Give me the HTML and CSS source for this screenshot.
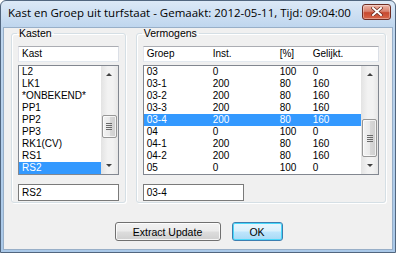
FILE: index.html
```html
<!DOCTYPE html>
<html lang="nl">
<head>
    <meta charset="UTF-8">
    <title>Kast en Groep uit turfstaat</title>
    <link rel="stylesheet" href="styles.css">
</head>
<body>
    <div class="window">
        <div class="titlebar">
            <span class="title">Kast en Groep uit turfstaat - Gemaakt: 2012-05-11, Tijd: 09:04:00</span>
            <button class="close">
                <svg width="12" height="9" viewBox="0 0 12 9">
                    <path d="M2 1 L10 8 M10 1 L2 8" stroke="#6b2a20" stroke-width="3.4" stroke-linecap="square"/>
                    <path d="M2 1 L10 8 M10 1 L2 8" stroke="#fff" stroke-width="2" stroke-linecap="square"/>
                </svg>
            </button>
        </div>

        <div class="client">
            <div class="groups">
                <fieldset class="group kasten">
                    <legend>Kasten</legend>
                    <div class="header">Kast</div>
                    <div class="listbox">
                        <div class="rows">
                            <div class="row">L2</div>
                            <div class="row">LK1</div>
                            <div class="row">*ONBEKEND*</div>
                            <div class="row">PP1</div>
                            <div class="row">PP2</div>
                            <div class="row">PP3</div>
                            <div class="row">RK1(CV)</div>
                            <div class="row">RS1</div>
                            <div class="row selected">RS2</div>
                        </div>
                        <div class="scrollbar">
                            <div class="arrow up"></div>
                            <div class="track"><div class="thumb thumb-kasten"><i></i><i></i><i></i><i></i></div></div>
                            <div class="arrow down"></div>
                        </div>
                    </div>
                    <div class="field">RS2</div>
                </fieldset>

                <fieldset class="group vermogens">
                    <legend>Vermogens</legend>
                    <div class="header cols">
                        <span>Groep</span><span>Inst.</span><span>[%]</span><span>Gelijkt.</span>
                    </div>
                    <div class="listbox">
                        <div class="rows">
                            <div class="row cols"><span>03</span><span>0</span><span>100</span><span>0</span></div>
                            <div class="row cols"><span>03-1</span><span>200</span><span>80</span><span>160</span></div>
                            <div class="row cols"><span>03-2</span><span>200</span><span>80</span><span>160</span></div>
                            <div class="row cols"><span>03-3</span><span>200</span><span>80</span><span>160</span></div>
                            <div class="row cols selected"><span>03-4</span><span>200</span><span>80</span><span>160</span></div>
                            <div class="row cols"><span>04</span><span>0</span><span>100</span><span>0</span></div>
                            <div class="row cols"><span>04-1</span><span>200</span><span>80</span><span>160</span></div>
                            <div class="row cols"><span>04-2</span><span>200</span><span>80</span><span>160</span></div>
                            <div class="row cols"><span>05</span><span>0</span><span>100</span><span>0</span></div>
                        </div>
                        <div class="scrollbar">
                            <div class="arrow up"></div>
                            <div class="track"><div class="thumb thumb-vermogens"><i></i><i></i><i></i><i></i></div></div>
                            <div class="arrow down"></div>
                        </div>
                    </div>
                    <div class="field short">03-4</div>
                </fieldset>
            </div>

            <div class="buttons">
                <button class="btn extract">Extract Update</button>
                <button class="btn ok">OK</button>
            </div>
        </div>
    </div>
</body>
</html>
```

FILE: styles.css
```css
body {
    margin: 0;
    font-family: "Liberation Sans", Arial, sans-serif;
    font-size: 10px;
    color: #000;
    background: #fff;
}

.window {
    width: 396px;
    height: 253px;
    box-sizing: border-box;
    border: 1px solid #51667f;
    border-radius: 6px 6px 0 0;
    background: linear-gradient(#dce9f7, #bfd6ee 26px, #a9c8e8);
    padding: 0 2px 2px;
    display: flex;
    flex-direction: column;
}

.titlebar {
    height: 26px;
    display: flex;
    align-items: center;
    justify-content: space-between;
    padding: 0 2px 0 5px;
}

.title {
    font-family: "Open Sans", "Noto Sans", sans-serif;
    font-size: 11.5px;
    color: #000;
    margin-top: -3px;
    white-space: nowrap;
}

.close {
    width: 29px;
    height: 16px;
    margin-top: -5px;
    padding: 0;
    border: 1px solid #6e2d24;
    border-radius: 3px;
    background: linear-gradient(#edb5a7, #d9826f 45%, #c7492f 55%, #d8674b);
    box-shadow: inset 0 0 0 1px rgba(255, 255, 255, 0.35);
    display: flex;
    align-items: center;
    justify-content: center;
}

.client {
    flex: 1;
    background: #f0f0f0;
    border: 1px solid #98afc8;
    padding: 0 6px 0 7px;
    display: flex;
    flex-direction: column;
}

.groups {
    display: flex;
    gap: 10px;
}

.group {
    margin: 0;
    padding: 0 6px 1px 6px;
    border: 1px solid #d5dfe5;
    border-radius: 3px;
    box-shadow: inset 1px 1px 0 #fff, 1px 1px 0 #fff;
    display: flex;
    flex-direction: column;
}

.kasten {
    width: 113px;
    box-sizing: border-box;
    width: 115px;
}

.vermogens {
    box-sizing: border-box;
    width: 251px;
}

legend {
    padding: 0 2px;
    margin-left: -1px;
    line-height: 11px;
    font-size: 10.5px;
}

.header,
.field {
    height: 16px;
    box-sizing: border-box;
    background: #fff;
    border: 1px solid #abadb3;
    border-color: #abadb3 #dbdfe6 #e3e9ef #e2e3ea;
    padding: 0 3px;
    line-height: 14px;
    white-space: nowrap;
}

.header {
    margin-top: 7px;
}

.field {
    margin-top: 9px;
    height: 17px;
    line-height: 15px;
    border: 1px solid #7a7a7a;
}

.field.short {
    width: 101px;
}

.cols {
    display: grid;
    grid-template-columns: 66px 67px 33px 1fr;
}

.listbox {
    margin-top: 3px;
    height: 110px;
    box-sizing: border-box;
    border: 1px solid #828790;
    background: #fff;
    display: flex;
}

.rows {
    flex: 1;
    min-width: 0;
}

.row {
    height: 12px;
    line-height: 12px;
    padding-left: 3px;
    white-space: nowrap;
}

.row.selected {
    background: #3399ff;
    color: #fff;
}

.scrollbar {
    width: 17px;
    display: flex;
    flex-direction: column;
    background: linear-gradient(90deg, #e3e3e3, #f2f2f2 40%, #f2f2f2 70%, #e6e6e6);
}

.arrow {
    height: 17px;
    display: flex;
    align-items: center;
    justify-content: center;
}

.arrow::before {
    content: '';
    border-left: 3px solid transparent;
    border-right: 3px solid transparent;
}

.arrow.up::before {
    border-bottom: 3px solid #404040;
}

.arrow.down::before {
    border-top: 3px solid #404040;
}

.track {
    flex: 1;
    display: flex;
    flex-direction: column;
}

.thumb {
    margin: 0 1px;
    box-sizing: border-box;
    border: 1px solid #979797;
    border-radius: 2px;
    background: linear-gradient(90deg, #f3f3f3, #e9e9e9 50%, #d8d8d8 51%, #cfcfcf);
    box-shadow: inset 0 0 0 1px rgba(255, 255, 255, 0.7);
    display: flex;
    flex-direction: column;
    align-items: center;
    justify-content: center;
    gap: 1px;
}

.thumb i {
    width: 6px;
    height: 1px;
    background: #6a6a6a;
}

.thumb-kasten {
    margin-top: 32px;
    height: 23px;
}

.thumb-vermogens {
    margin-top: 36px;
    height: 38px;
}

.buttons {
    margin-top: 19px;
    display: flex;
    justify-content: center;
    gap: 11px;
}

.btn {
    height: 19px;
    padding: 0;
    font-family: "Liberation Sans", Arial, sans-serif;
    font-size: 10.5px;
    color: #000;
    border: 1px solid #707070;
    border-radius: 3px;
    background: linear-gradient(#f2f2f2, #ebebeb 48%, #dddddd 52%, #cfcfcf);
    box-shadow: inset 0 0 0 1px rgba(255, 255, 255, 0.8);
}

.btn.extract {
    width: 106px;
}

.btn.ok {
    width: 51px;
    border-color: #3c7fb1;
    background: linear-gradient(#eaf6fd, #d9f0fc 48%, #bee6fd 52%, #a7d9f5);
    box-shadow: inset 0 0 0 1px #48d8fb, 0 0 0 0 transparent;
}
```
